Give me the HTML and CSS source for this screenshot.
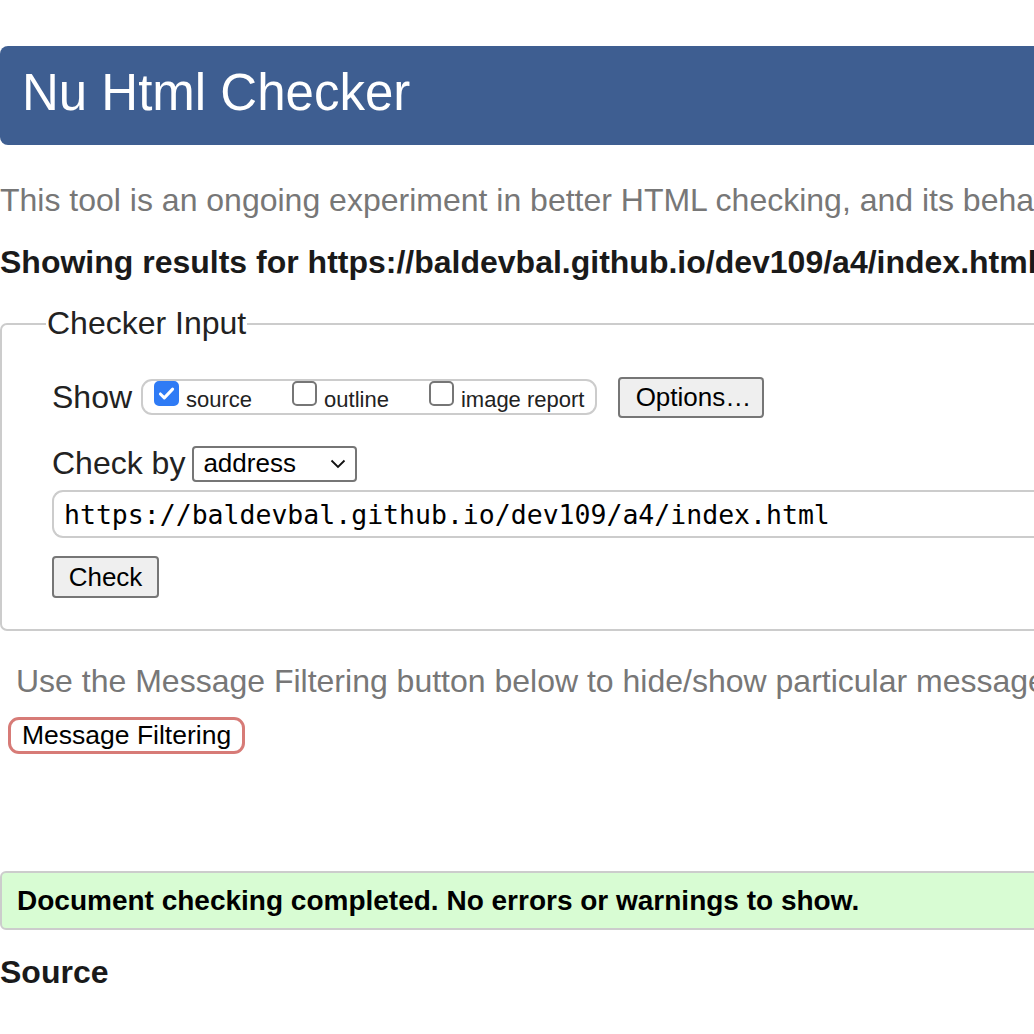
FILE: index.html
```html
<!DOCTYPE html>
<html>
<head>
<meta charset="utf-8">
<title>Nu Html Checker</title>
<link rel="stylesheet" href="styles.css">
</head>
<body>
<div class="page">
  <header class="banner"><h1 class="title">Nu Html Checker</h1></header>
  <p class="intro">This tool is an ongoing experiment in better HTML checking, and its behavior remains subject to change</p>
  <p class="results">Showing results for https://baldevbal.github.io/dev109/a4/index.html</p>
  <fieldset class="inputs">
    <legend class="legend">Checker Input</legend>
    <div class="row show-row">
      <span class="label">Show</span>
      <span class="group">
        <span class="opt"><span class="box checked"><svg viewBox="0 0 24 24" width="21" height="21"><path d="M5 12.5l4.5 4.5L19 7" fill="none" stroke="#fff" stroke-width="3.4" stroke-linecap="round" stroke-linejoin="round"/></svg></span>source</span>
        <span class="opt"><span class="box"></span>outline</span>
        <span class="opt"><span class="box"></span>image report</span>
      </span>
      <span class="btn options">Options…</span>
    </div>
    <div class="row check-row">
      <span class="label">Check by</span>
      <span class="select">address<svg class="chev" viewBox="0 0 16 10" width="16" height="10"><path d="M1.5 1.5L8 8l6.5-6.5" fill="none" stroke="#111" stroke-width="1.8"/></svg></span>
    </div>
    <div class="url">https://baldevbal.github.io/dev109/a4/index.html</div>
    <div class="row"><span class="btn check">Check</span></div>
  </fieldset>
  <p class="filter-note">Use the Message Filtering button below to hide/show particular messages, and to see total counts of errors and warnings.</p>
  <span class="filter-btn">Message Filtering</span>
  <div class="success">Document checking completed. No errors or warnings to show.</div>
  <h2 class="source">Source</h2>
  <pre class="code">    <span class="ln">1.</span> &lt;!DOCTYPE html&gt;</pre>
</div>
</body>
</html>
```
FILE: styles.css
```css
html, body {
  margin: 0;
  padding: 0;
  background: #fff;
  overflow: hidden;
}
.page {
  width: 1500px;
  font-family: "Liberation Sans", Arial, sans-serif;
  color: #222;
  padding-top: 46px;
}
.banner {
  background: #3e5e91;
  height: 99px;
  box-sizing: border-box;
  border-radius: 8px 0 0 8px;
  display: flex;
  align-items: center;
  padding: 0 0 6px 22px;
}
.title {
  margin: 0;
  font-weight: normal;
  font-size: 51px;
  color: #fff;
  line-height: 1;
}
.intro {
  margin: 37px 0 0;
  font-size: 32px;
  line-height: 37px;
  color: #777;
  white-space: nowrap;
}
.results {
  margin: 25px 0 0;
  font-size: 32px;
  line-height: 37px;
  font-weight: bold;
  color: #1a1a1a;
  white-space: nowrap;
}
.inputs {
  margin: 24px 0 0;
  border: 2px solid #ccc;
  border-radius: 7px 0 0 7px;
  padding: 0 0 31px 50px;
  min-width: 0;
}
.legend {
  font-size: 32px;
  color: #222;
  padding: 0 1px;
  margin-left: -6px;
  line-height: 37px;
}
.row {
  display: flex;
  align-items: center;
}
.show-row {
  margin-top: 34px;
  height: 42px;
}
.label {
  font-size: 32px;
  color: #222;
  margin-right: 9px;
  line-height: 37px;
}
.group {
  display: flex;
  align-items: center;
  box-sizing: border-box;
  border: 2px solid #ccc;
  border-radius: 11px;
  height: 36px;
  padding: 0 11px 0 11px;
  gap: 40px;
}
.opt {
  display: flex;
  align-items: center;
  font-size: 22px;
  color: #222;
  padding-top: 5px;
}
.box {
  box-sizing: border-box;
  width: 25px;
  height: 25px;
  border: 2px solid #767676;
  border-radius: 5px;
  margin-right: 7px;
  margin-top: -12px;
  display: flex;
  align-items: center;
  justify-content: center;
  background: #fff;
}
.box.checked {
  background: #2f7bf5;
  border-color: #2f7bf5;
}
.btn {
  display: inline-flex;
  align-items: center;
  justify-content: center;
  background: #efefef;
  border: 2px solid #767676;
  border-radius: 4px;
  font-size: 26px;
  color: #000;
  box-sizing: border-box;
}
.options {
  margin-left: 21px;
  width: 146px;
  height: 41px;
  padding-left: 4px;
}
.check-row {
  margin-top: 27px;
  height: 37px;
}
.select {
  display: inline-flex;
  align-items: center;
  justify-content: space-between;
  box-sizing: border-box;
  width: 165px;
  height: 36px;
  border: 2px solid #767676;
  border-radius: 4px;
  font-size: 26px;
  color: #000;
  padding: 0 9px 0 9px;
  margin-left: -2px;
}
.url {
  margin-top: 8px;
  box-sizing: border-box;
  height: 48px;
  border: 2px solid #ccc;
  border-right: none;
  border-radius: 11px 0 0 11px;
  font-family: "DejaVu Sans Mono", monospace;
  font-size: 26.5px;
  color: #000;
  display: flex;
  align-items: center;
  padding-left: 10px;
}
.check {
  margin-top: 18px;
  width: 107px;
  height: 42px;
}
.filter-note {
  margin: 32px 0 0 16px;
  font-size: 32px;
  line-height: 37px;
  color: #777;
  white-space: nowrap;
}
.filter-btn {
  display: inline-block;
  margin: 17px 0 0 8px;
  border: 3px solid #d77b77;
  border-radius: 11px;
  font-size: 26.5px;
  color: #000;
  padding: 0 11px;
  line-height: 31px;
}
.success {
  margin-top: 117px;
  background: #d8fcd3;
  box-sizing: border-box;
  border: 2px solid #ccc;
  border-radius: 6px 0 0 6px;
  height: 59px;
  display: flex;
  align-items: center;
  padding-left: 15px;
  font-size: 28px;
  font-weight: bold;
  color: #000;
}
.source {
  margin: 24px 0 0;
  font-size: 32px;
  line-height: 37px;
  color: #1a1a1a;
}
.code {
  margin: 41px 0 0;
  font-family: "DejaVu Sans Mono", monospace;
  font-size: 26px;
  color: #777;
}
```
